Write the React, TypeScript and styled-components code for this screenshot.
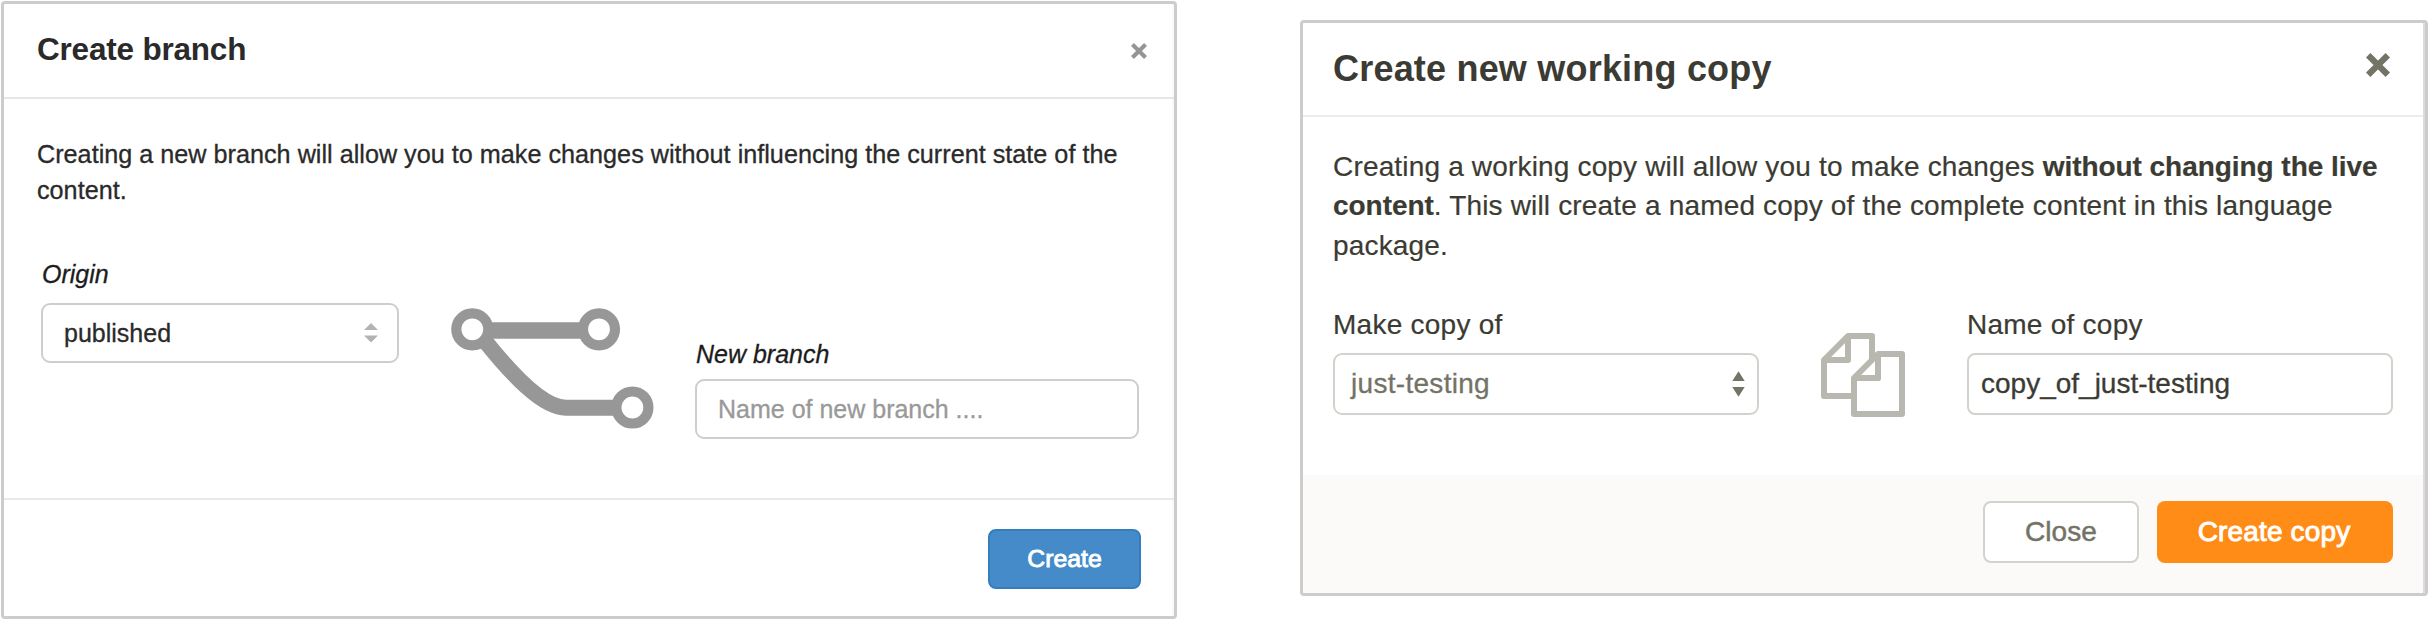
import React from "react";
import styled, { createGlobalStyle } from "styled-components";

const GlobalStyle = createGlobalStyle`
  * { box-sizing: border-box; }
  body {
    margin: 0;
    background: #fff;
    font-family: "Liberation Sans", Arial, Helvetica, sans-serif;
  }
`;

const Page = styled.main`
  display: flex;
  align-items: flex-start;
  width: 2434px;
  height: 620px;
  overflow: hidden;
`;

const Dialog = styled.section`
  display: flex;
  flex-direction: column;
  flex: none;
  border: 3px solid #cbcccb;
  border-radius: 4px;
`;

const BranchDialog = styled(Dialog)`
  width: 1176px;
  height: 618px;
  margin: 1px 0 0 1px;
  color: #2a2a2a;
  box-shadow: inset -2px 0 #f9f9f9;
`;

const CopyDialog = styled(Dialog)`
  width: 1128px;
  height: 576px;
  margin: 20px 0 0 123px;
  padding-right: 2px;
  color: #3b3b33;
  box-shadow: inset -2px 0 #dcdcdc;
`;

const BranchHeader = styled.header`
  display: flex;
  align-items: flex-start;
  justify-content: space-between;
  height: 95px;
  padding: 0 27px 0 33px;
  border-bottom: 2px solid #e6e6e6;
`;

const CopyHeader = styled.header`
  display: flex;
  align-items: flex-start;
  justify-content: space-between;
  height: 94px;
  padding: 0 33px 0 30px;
  border-bottom: 2px solid #ededed;
`;

const Title = styled.h2<{ $size: number; $line: number; $spacing?: number }>`
  margin: 0;
  font-size: ${(p) => p.$size}px;
  line-height: ${(p) => p.$line}px;
  letter-spacing: ${(p) => p.$spacing ?? 0}px;
  font-weight: 700;
  white-space: nowrap;
`;

const CloseIcon = styled.button<{ $size: number; $top?: number; $tone: string }>`
  display: block;
  width: ${(p) => p.$size}px;
  height: ${(p) => p.$size}px;
  margin: ${(p) => p.$top ?? 0}px 0 0;
  padding: 0;
  border: 0;
  background: none;
  color: ${(p) => p.$tone};

  svg { display: block; width: 100%; height: 100%; }
`;

const BranchBody = styled.div`
  height: 399px;
  padding: 38px 33px 0 32px;
`;

const CopyBody = styled.div`
  height: 358px;
  padding: 30px 30px 0;
`;

const BranchText = styled.p`
  width: 1100px;
  height: 71px;
  margin: 0 0 51px;
  padding-left: 1px;
  font-size: 25.2px;
  line-height: 35.5px;
  letter-spacing: 0.01px;
  -webkit-text-stroke: 0.3px currentColor;
`;

const CopyText = styled.p`
  width: 1066px;
  height: 118px;
  margin: 0 0 43px;
  font-size: 28px;
  line-height: 39.3px;
  letter-spacing: 0.17px;
  -webkit-text-stroke: 0.2px currentColor;
`;

const Line = styled.span`
  display: block;
  white-space: nowrap;
`;

const Strong = styled.strong`
  letter-spacing: -0.05px;
`;

const BranchFields = styled.div`
  display: flex;
  align-items: flex-start;
  margin-left: 5px;
`;

const CopyFields = styled.div`
  display: flex;
  align-items: flex-start;
  gap: 62px;
`;

const Field = styled.div<{ $width: number; $drop?: number }>`
  flex: none;
  width: ${(p) => p.$width}px;
  padding-top: ${(p) => p.$drop ?? 0}px;
`;

const BranchLabel = styled.label<{ $gap: number }>`
  display: block;
  margin-bottom: ${(p) => p.$gap}px;
  padding-left: 1px;
  color: #1c1c1c;
  font-size: 25px;
  font-style: italic;
  line-height: 30px;
  -webkit-text-stroke: 0.3px currentColor;
`;

const CopyLabel = styled.label`
  display: block;
  margin-bottom: 11px;
  font-size: 28px;
  line-height: 34px;
  letter-spacing: 0.25px;
  -webkit-text-stroke: 0.2px currentColor;
`;

const BranchSelect = styled.div`
  display: flex;
  align-items: center;
  justify-content: space-between;
  height: 60px;
  padding: 0 19px 0 21px;
  border: 2px solid #cecece;
  border-radius: 9px;
  font-size: 25px;
  -webkit-text-stroke: 0.3px currentColor;
`;

const CopySelect = styled.div`
  display: flex;
  align-items: center;
  justify-content: space-between;
  height: 62px;
  padding: 0 12px 0 16px;
  border: 2px solid #d3d3cd;
  border-radius: 9px;
  color: #737366;
  font-size: 28px;
  letter-spacing: 0.3px;
  -webkit-text-stroke: 0.3px currentColor;
`;

const BranchInput = styled.input`
  display: block;
  width: 100%;
  height: 60px;
  padding: 0 21px;
  border: 2px solid #cecece;
  border-radius: 9px;
  background: #fff;
  font: 25px "Liberation Sans", Arial, sans-serif;
  -webkit-text-stroke: 0.3px #999;

  &::placeholder { color: #999; opacity: 1; }
`;

const CopyInput = styled.input`
  display: block;
  width: 100%;
  height: 62px;
  padding: 0 12px;
  border: 2px solid #d3d3cd;
  border-radius: 8px;
  background: #fff;
  color: #3b3b33;
  font: 28px "Liberation Sans", Arial, sans-serif;
  -webkit-text-stroke: 0.3px #3b3b33;
`;

const BranchGraphic = styled.svg`
  display: block;
  flex: none;
  width: 204px;
  height: 122px;
  margin: 49px 41px 0 51px;
`;

const CopyGraphic = styled.svg`
  display: block;
  flex: none;
  width: 84px;
  height: 84px;
  margin-top: 25px;
`;

const BranchFooter = styled.footer`
  display: flex;
  justify-content: flex-end;
  flex: 1;
  padding: 29px 33px 0;
  border-top: 2px solid #e9e9e9;
`;

const CopyFooter = styled.footer`
  display: flex;
  justify-content: flex-end;
  gap: 18px;
  flex: 1;
  padding: 26px 30px 0;
  border-radius: 0 0 5px 5px;
  background: #fbfaf8;
`;

const Button = styled.button`
  padding: 0;
  border-radius: 8px;
  font-family: inherit;
  text-align: center;
`;

const CreateButton = styled(Button)`
  width: 153px;
  height: 60px;
  border: 2px solid #357ebd;
  background: #458bc9;
  color: #fff;
  font-size: 24.8px;
  -webkit-text-stroke: 0.9px #fff;
`;

const PlainButton = styled(Button)`
  width: 156px;
  height: 62px;
  border: 2px solid #d3d3cd;
  background: #fff;
  color: #737366;
  font-size: 28px;
  letter-spacing: 0.1px;
  -webkit-text-stroke: 0.5px #737366;
`;

const PrimaryButton = styled(Button)`
  width: 236px;
  height: 62px;
  padding-right: 2px;
  border: 0;
  background: #ff8c17;
  color: #fff;
  font-size: 28px;
  letter-spacing: 0.15px;
  -webkit-text-stroke: 0.9px #fff;
`;

function Cross({ weight }: { weight: number }) {
  const near = weight * 0.354;
  const far = 24 - near;
  return (
    <svg viewBox="0 0 24 24" aria-hidden="true">
      <path
        d={`M${near} ${near}L${far} ${far}M${far} ${near}L${near} ${far}`}
        stroke="currentColor"
        strokeWidth={weight}
      />
    </svg>
  );
}

export default function App() {
  return (
    <>
      <GlobalStyle />
      <Page>
        <BranchDialog>
          <BranchHeader>
            <Title $size={31.5} $line={91} $spacing={-0.2}>Create branch</Title>
            <CloseIcon $size={16} $top={39} $tone="#959595" aria-label="Close">
              <Cross weight={6.2} />
            </CloseIcon>
          </BranchHeader>
          <BranchBody>
            <BranchText>
              Creating a new branch will allow you to make changes without influencing the current state of the
              content.
            </BranchText>
            <BranchFields>
              <Field $width={358}>
                <BranchLabel $gap={14}>Origin</BranchLabel>
                <BranchSelect>
                  published
                  <svg width="14" height="20" viewBox="0 0 14 20" fill="#b3b3b3" stroke="none">
                    <path d="M7 0L14 7H0ZM0 12.5H14L7 19.5Z" />
                  </svg>
                </BranchSelect>
              </Field>
              <BranchGraphic viewBox="450 308 204 122" fill="none" stroke="#979797">
                <path d="M488 330.5H584" strokeWidth="16.3" />
                <path d="M483 338.5C512 375 543 407.7 566 407.7H618" strokeWidth="16" />
                <g fill="#fff" strokeWidth="10.2">
                  <circle cx="472.3" cy="329.3" r="16" />
                  <circle cx="599" cy="329.3" r="16" />
                  <circle cx="632.4" cy="407.5" r="16" />
                </g>
              </BranchGraphic>
              <Field $width={444} $drop={80}>
                <BranchLabel $gap={10}>New branch</BranchLabel>
                <BranchInput placeholder="Name of new branch ...." />
              </Field>
            </BranchFields>
          </BranchBody>
          <BranchFooter>
            <CreateButton>Create</CreateButton>
          </BranchFooter>
        </BranchDialog>

        <CopyDialog>
          <CopyHeader>
            <Title $size={36} $line={91} $spacing={0.2}>Create new working copy</Title>
            <CloseIcon $size={24} $top={30} $tone="#737366" aria-label="Close">
              <Cross weight={6.2} />
            </CloseIcon>
          </CopyHeader>
          <CopyBody>
            <CopyText>
              <Line>
                Creating a working copy will allow you to make changes <Strong>without changing the live</Strong>
              </Line>
              <Line>
                <Strong>content</Strong>. This will create a named copy of the complete content in this language
              </Line>
              <Line>package.</Line>
            </CopyText>
            <CopyFields>
              <Field $width={426}>
                <CopyLabel>Make copy of</CopyLabel>
                <CopySelect>
                  just-testing
                  <svg width="13" height="26" viewBox="0 0 13 26" fill="#737366" stroke="none">
                    <path d="M6.5 0.3L12.7 10H0.3ZM0.3 16H12.7L6.5 25.7Z" />
                  </svg>
                </CopySelect>
              </Field>
              <CopyGraphic
                viewBox="0 0 84 84"
                fill="none"
                stroke="#b8b8b1"
                strokeWidth="6"
                strokeLinejoin="round"
              >
                <path d="M33 63H3V27L27 3H51V27M27 3V27H3" />
                <path d="M57 21H81V81H33V45ZV45H33" />
                <path d="M57 21V45H33" />
              </CopyGraphic>
              <Field $width={426}>
                <CopyLabel>Name of copy</CopyLabel>
                <CopyInput defaultValue="copy_of_just-testing" />
              </Field>
            </CopyFields>
          </CopyBody>
          <CopyFooter>
            <PlainButton>Close</PlainButton>
            <PrimaryButton>Create copy</PrimaryButton>
          </CopyFooter>
        </CopyDialog>
      </Page>
    </>
  );
}
